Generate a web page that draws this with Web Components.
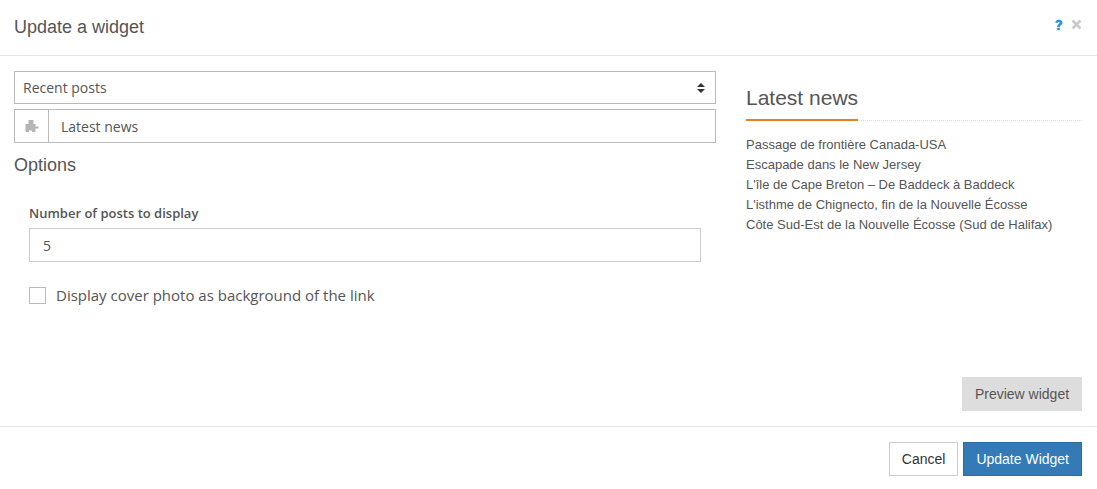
<!DOCTYPE html>
<html>
<head>
<meta charset="utf-8">
<title>Update a widget</title>
<style>
html, body { margin: 0; background: #fff; }
</style>
</head>
<body>
<widget-modal heading="Update a widget">
    <widget-form slot="form"></widget-form>
    <widget-preview slot="preview" heading="Latest news">
        <li>Passage de frontière Canada-USA</li>
        <li>Escapade dans le New Jersey</li>
        <li>L'île de Cape Breton – De Baddeck à Baddeck</li>
        <li>L'isthme de Chignecto, fin de la Nouvelle Écosse</li>
        <li>Côte Sud-Est de la Nouvelle Écosse (Sud de Halifax)</li>
    </widget-preview>
</widget-modal>
<script>
customElements.define('widget-modal', class extends HTMLElement {
    constructor() {
        super();
        this.shadow = this.attachShadow({mode: 'open'});
        this.shadow.innerHTML = `<style>
        :host {
            display: flex; flex-direction: column;
            width: 1097px; height: 489px;
            font-family: "Liberation Sans", Arial, sans-serif; color: #333;
        }
        header {
            display: flex; justify-content: space-between; align-items: center;
            box-sizing: border-box; height: 56px; padding: 0 15px 0 14px;
            border-bottom: 1px solid #e5e5e5;
        }
        h1 {
            margin: 0;
            font: 400 18px "Liberation Sans", Arial, sans-serif; color: #555;
        }
        .tools { display: flex; gap: 7px; align-items: center; margin-top: -6px; }
        .tools svg { display: block; }
        main {
            display: flex; justify-content: space-between;
            height: 371px; box-sizing: border-box;
            padding: 15px 15px 15px 14px;
            border-bottom: 1px solid #e5e5e5;
        }
        footer {
            display: flex; justify-content: flex-end; gap: 5px;
            padding: 15px 15px 13px;
        }
        button {
            box-sizing: border-box; height: 34px; padding: 0 12px;
            font: 14px "Liberation Sans", Arial, sans-serif;
            border: 1px solid #ccc; background: #fff; color: #333;
        }
        button.primary { background: #337ab7; border-color: #2e6da4; color: #fff; }
        </style>
        <header>
            <h1>${this.getAttribute('heading')}</h1>
            <div class="tools">
                <svg width="10" height="12" viewBox="0 0 10 12"><path d="M1.300 3.600C1.500 1.600 3 .8 4.900.8c2 0 3.600 1 3.600 2.900 0 1.400-.8 2-1.700 2.600-.7.5-1 .8-1 1.600H3.200c0-1.500.5-2.100 1.400-2.700.6-.4 1-.8 1-1.400 0-.6-.4-.9-1-.9-.7 0-1.100.4-1.200 1.100zM3.200 8.800h2.600v2.400H3.200z" fill="#2a8fe8"/></svg>
                <svg width="11" height="11" viewBox="0 0 11 11"><path d="M1.500 1.500l8 8M9.500 1.500l-8 8" stroke="#ccc" stroke-width="2.800" fill="none"/></svg>
            </div>
        </header>
        <main>
            <slot name="form"></slot>
            <slot name="preview"></slot>
        </main>
        <footer>
            <button>Cancel</button>
            <button class="primary">Update Widget</button>
        </footer>`;
    }
});

customElements.define('widget-form', class extends HTMLElement {
    constructor() {
        super();
        this.shadow = this.attachShadow({mode: 'open'});
        this.shadow.innerHTML = `<style>
        :host {
            display: block; width: 702px;
            font: 14px "Open Sans", sans-serif; color: #555;
        }
        .box {
            box-sizing: border-box; display: flex; align-items: center;
            border: 1px solid #bbb; background: #fff;
        }
        .select { height: 33px; padding: 0 9px 0 8px; justify-content: space-between; }
        .select svg { display: block; }
        .title { height: 34px; margin-top: 5px; }
        .addon {
            box-sizing: border-box; width: 34px; height: 100%;
            display: flex; align-items: center; justify-content: center;
            border-right: 1px solid #bbb;
        }
        .title span { padding-left: 12px; }
        h2 { margin: 10px 0 0; font: 400 18px/24px "Liberation Sans", Arial, sans-serif; }
        .options { padding: 27px 15px 0; }
        label { display: block; font-weight: 600; font-size: 13px; line-height: 18px; }
        .number { height: 34px; margin-top: 6px; padding-left: 13px; border-color: #ccc; }
        .check { display: flex; align-items: center; gap: 10px; margin-top: 23px; line-height: 20px; font-size: 15px; }
        .check i { box-sizing: border-box; width: 17px; height: 17px; border: 1px solid #bbb; }
        </style>
        <div class="box select">
            <span>Recent posts</span>
            <svg width="10" height="13" viewBox="0 0 10 13"><path d="M5 2l4 4H1zM5 12L1 8h8z" fill="#333"/></svg>
        </div>
        <div class="box title">
            <div class="addon">
                <svg width="14" height="13" viewBox="0 0 14 13"><path d="M3.500 0h5v4h2v2.500h3v2h-3V12H7v-1.500H4V12H.5V4h3z" fill="#b5b5b5"/></svg>
            </div>
            <span>Latest news</span>
        </div>
        <h2>Options</h2>
        <div class="options">
            <label>Number of posts to display</label>
            <div class="box number">5</div>
            <div class="check"><i></i><span>Display cover photo as background of the link</span></div>
        </div>`;
    }
});

customElements.define('widget-preview', class extends HTMLElement {
    constructor() {
        super();
        this.shadow = this.attachShadow({mode: 'open'});
        this.shadow.innerHTML = `<style>
        :host {
            display: flex; flex-direction: column; width: 336px; height: 340px;
            font: 13px/20px "Liberation Sans", Arial, sans-serif; color: #555;
        }
        .head { border-bottom: 1px dotted #ddd; height: 49px; margin-bottom: 14px; padding-top: 0; }
        h3 {
            display: inline-block; box-sizing: border-box; height: 50px; margin: 0; padding-top: 15px;
            font: 400 21px/24px "Liberation Sans", Arial, sans-serif;
            border-bottom: 2px solid #e67e22;
        }
        ul { margin: 0; padding: 0; list-style: none; flex: 1; }
        ::slotted(li) { list-style: none; }
        button {
            align-self: flex-end; box-sizing: border-box; width: 120px; height: 34px;
            border: 0; background: #ddd; color: #555;
            font: 14px "Liberation Sans", Arial, sans-serif;
        }
        </style>
        <div class="head"><h3>${this.getAttribute('heading')}</h3></div>
        <ul><slot></slot></ul>
        <button>Preview widget</button>`;
    }
});
</script>
</body>
</html>
